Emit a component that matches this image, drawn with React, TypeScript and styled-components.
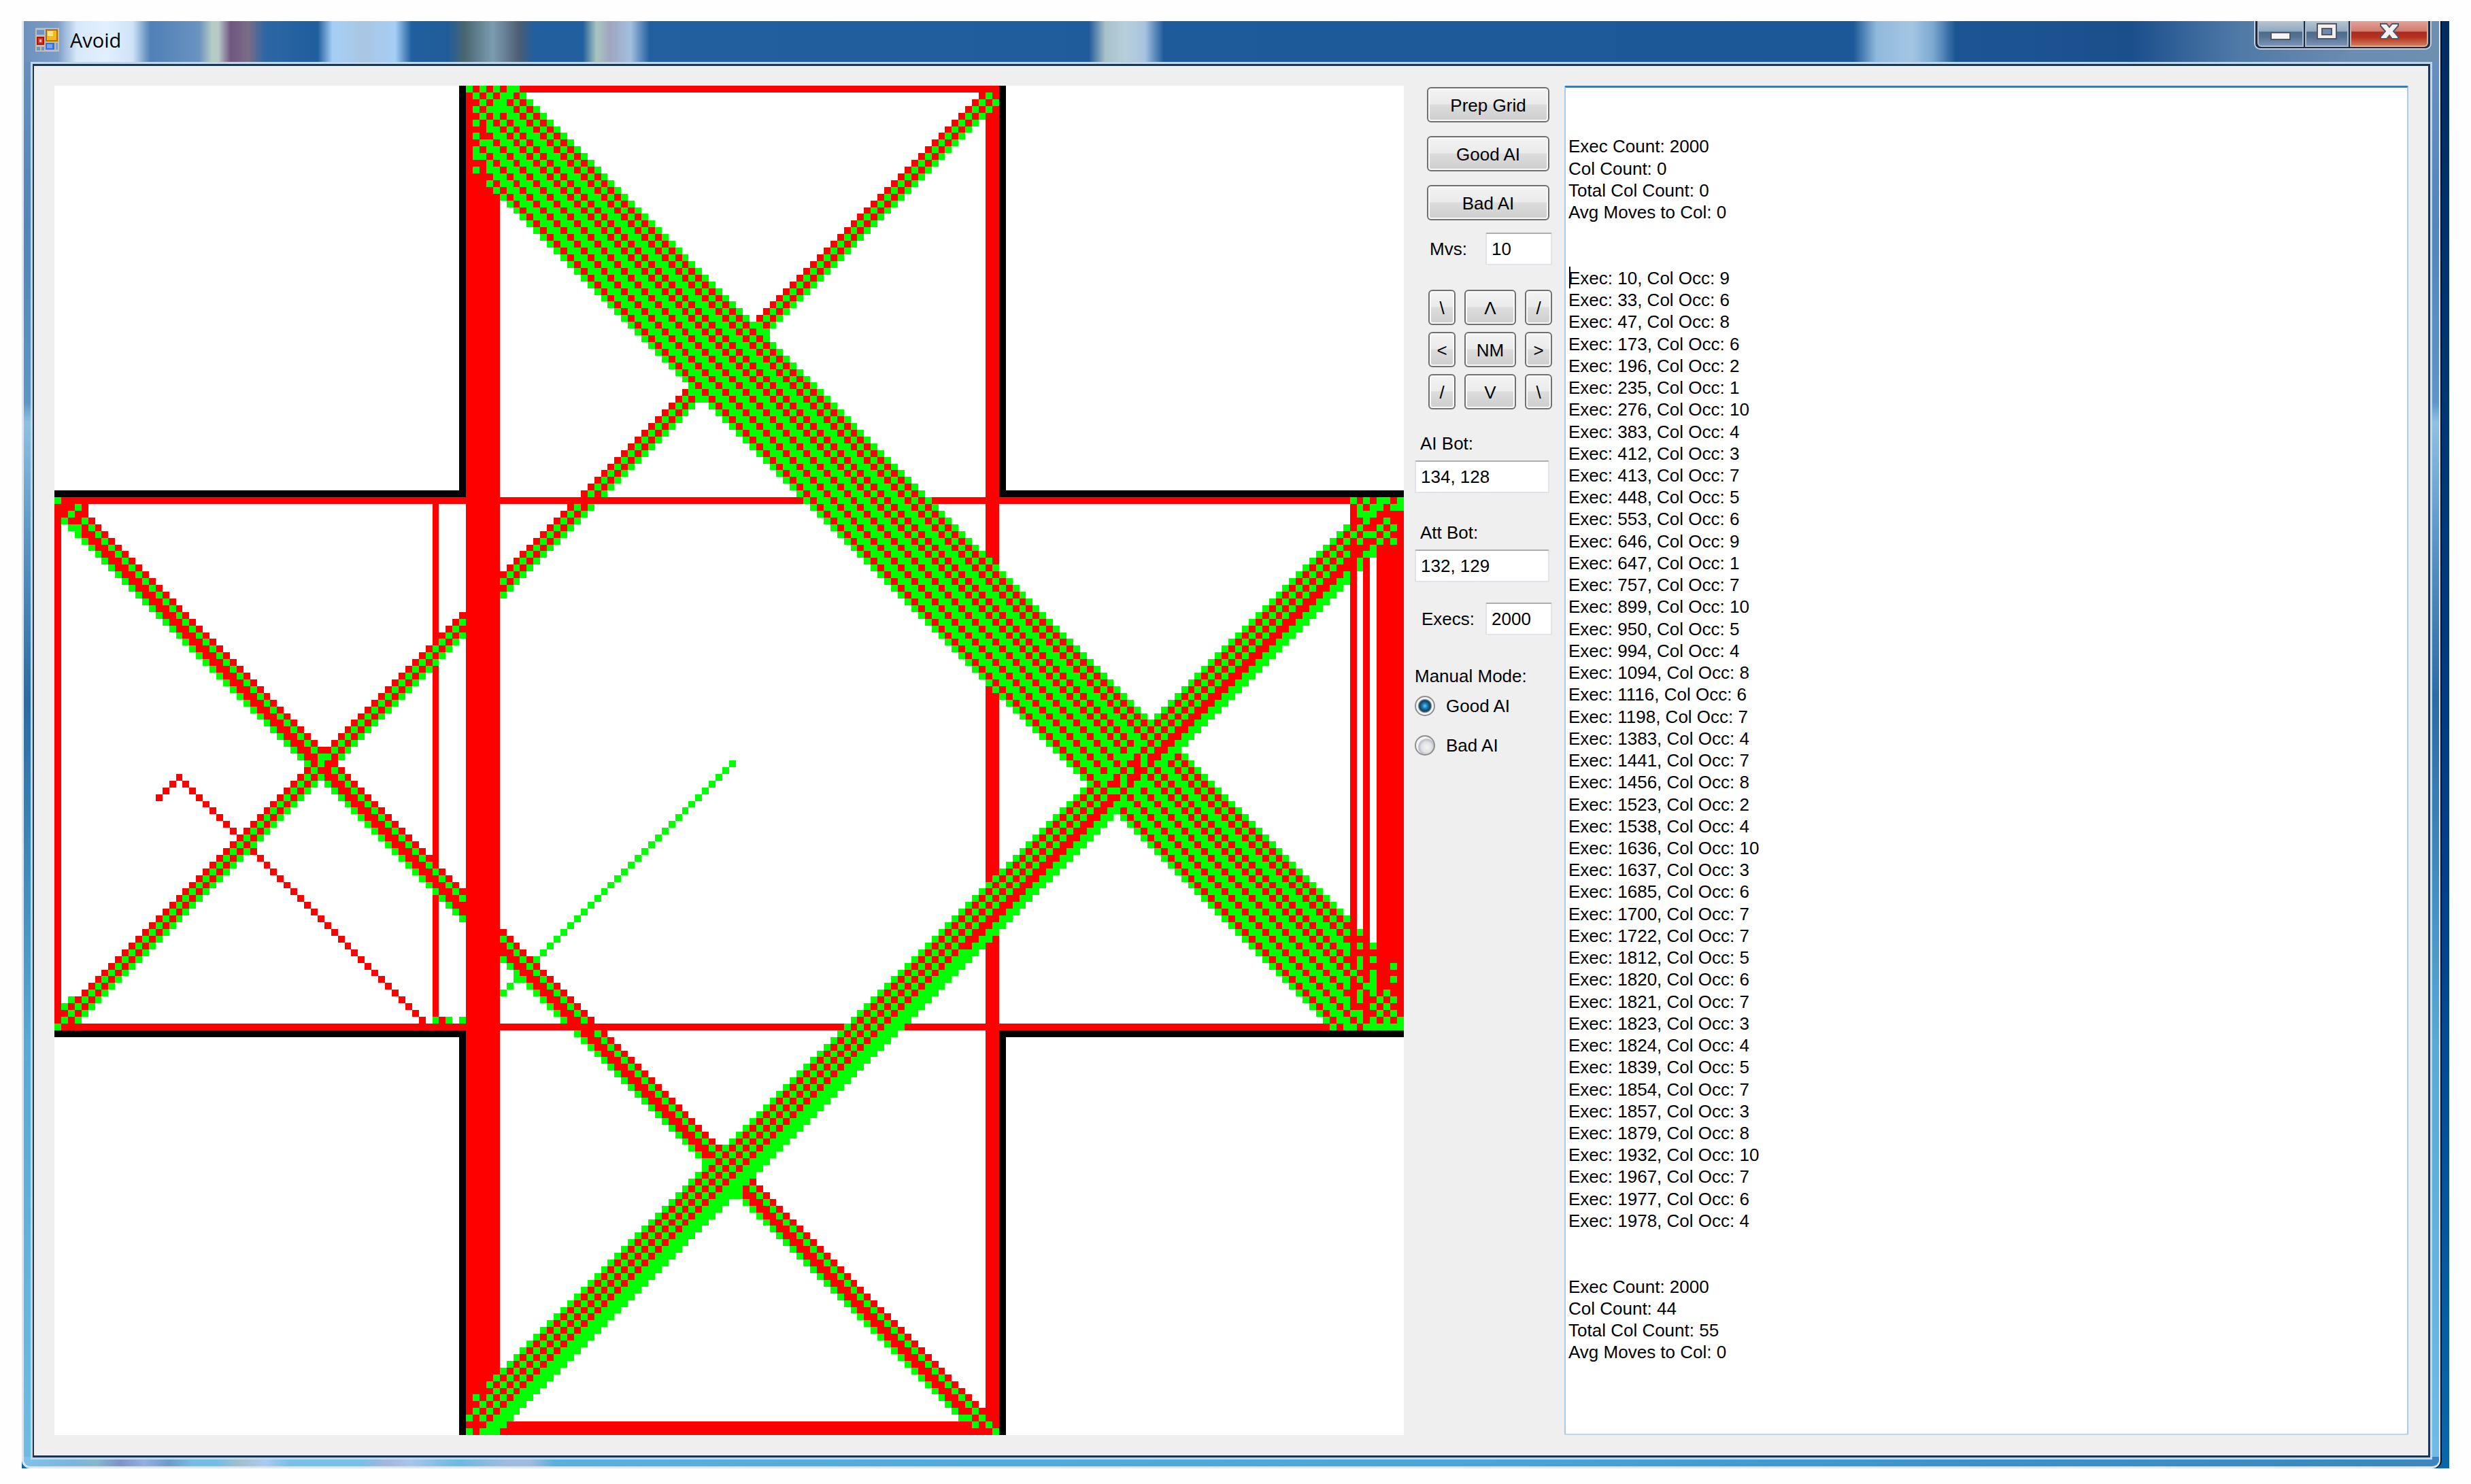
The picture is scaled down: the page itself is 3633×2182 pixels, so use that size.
import React from "react";
import styled, { createGlobalStyle, css } from "styled-components";

const GlobalStyle = createGlobalStyle`
  *, *::before, *::after { box-sizing: border-box; }
  body { margin: 0; background: #fefefe; }
`;

const uiFont = css`
  font-family: "Liberation Sans", Arial, sans-serif;
  font-size: 26px;
  line-height: 32px;
  color: #000;
`;

/* ---------- grid model ---------- */

const SIZE = 200;
type Cell = "W" | "R" | "G" | "K";

function buildGrid(): Cell[][] {
  const g: Cell[][] = Array.from({ length: SIZE }, () => Array<Cell>(SIZE).fill("W"));
  const inField = (x: number, y: number) =>
    x >= 0 && y >= 0 && x < SIZE && y < SIZE && ((x > 60 && x < 140) || (y > 60 && y < 140));
  const set = (x: number, y: number, c: Cell) => {
    if (x >= 0 && y >= 0 && x < SIZE && y < SIZE) g[y][x] = c;
  };
  const rect = (x0: number, x1: number, y0: number, y1: number, c: Cell) => {
    for (let y = y0; y <= y1; y++) for (let x = x0; x <= x1; x++) set(x, y, c);
  };
  const text = (y: number, x: number, s: string) => {
    for (let i = 0; i < s.length; i++) set(x + i, y, s[i] as Cell);
  };
  const falling = (first: number, s: string) => {
    for (let y = 0; y < SIZE; y++)
      for (let i = 0; i < s.length; i++) if (inField(y + first + i, y)) set(y + first + i, y, s[i] as Cell);
  };
  const rising = (first: number, s: string, y0 = 0, y1 = SIZE - 1) => {
    for (let y = y0; y <= y1; y++)
      for (let i = 0; i < s.length; i++) if (inField(first + i - y, y)) set(first + i - y, y, s[i] as Cell);
  };
  const weave = (y: number, x0: number, x1: number, reds: number[]) => {
    for (let x = x0; x <= x1; x++) set(x, y, reds.includes(x) ? "R" : "G");
  };

  // walls of the cross
  rect(60, 60, 0, 60, "K");
  rect(60, 60, 140, 199, "K");
  rect(140, 140, 0, 60, "K");
  rect(140, 140, 140, 199, "K");
  rect(0, 60, 60, 60, "K");
  rect(140, 199, 60, 60, "K");
  rect(0, 60, 140, 140, "K");
  rect(140, 199, 140, 140, "K");

  // side tracks
  rect(138, 139, 0, 199, "R");
  rect(0, 0, 61, 139, "R");
  rect(56, 56, 61, 138, "R");
  rect(192, 192, 61, 139, "R");
  rect(194, 194, 61, 139, "R");
  rect(196, 199, 61, 139, "R");

  // single trails
  for (let y = 100; y <= 134; y++) set(200 - y, y, "G");
  for (let i = 0; i < 4; i++) set(15 + i, 105 - i, "R");
  for (let y = 103; y <= 138; y++) set(y - 84, y, "R");
  text(138, 56, "GRGWG");

  // narrow diagonals
  falling(-63, "GRRGR");
  rising(138, "RGRG");
  set(39, 99, "G");
  set(41, 100, "R");
  set(40, 101, "R");

  // outer tracks
  rect(61, 139, 0, 0, "R");
  rect(61, 139, 198, 199, "R");
  rect(0, 199, 61, 61, "R");
  rect(0, 199, 139, 139, "R");
  rect(61, 65, 0, 199, "R");

  // wide diagonals
  rising(256, "GRGRGRRGG", 0, 127);
  rising(256, "GRGRGRGGG", 128, 199);
  falling(50, "GRGGRGGRGGRGRGGRGRG");

  weave(97, 147, 167, [148, 151, 154, 157, 159, 162, 164, 165]);
  weave(98, 148, 166, [149, 152, 155, 158, 161, 163, 164]);
  weave(99, 149, 167, [150, 153, 156, 160, 162, 163, 166]);
  weave(100, 150, 168, [151, 154, 157, 159, 160, 162, 165, 167]);
  weave(101, 151, 169, [152, 155, 158, 160, 161, 163, 166, 168]);
  weave(102, 152, 170, [153, 157, 159, 160, 162, 164, 167, 169]);
  weave(103, 153, 171, [154, 156, 157, 159, 163, 165, 168, 170]);
  weave(104, 152, 172, [153, 155, 158, 161, 164, 166, 169, 171]);
  weave(105, 151, 173, [152, 154, 156, 157, 159, 162, 165, 167, 170, 172]);
  weave(106, 150, 174, [151, 153, 155, 156, 160, 163, 166, 168, 171, 173]);

  // upper left of the column
  text(0, 61, "GRGRGRGG");
  text(1, 61, "RGRGRGGRG");
  text(2, 61, "RRGRGGRGRG");
  text(3, 61, "RGRGGGGRGRG");
  text(4, 61, "RRGRGRGGRGRG");
  text(5, 61, "RGRGRGRGGRGRG");
  text(6, 61, "RRR");
  text(7, 61, "RGRR");
  text(8, 61, "RR");
  text(9, 61, "RGR");
  text(10, 61, "RGG");
  text(11, 61, "RRR");
  text(12, 61, "RGR");
  text(13, 61, "RRRR");

  // lower left of the column
  set(62, 198, "R");
  set(61, 195, "R");
  set(63, 193, "R");

  // lower right of the column
  text(196, 133, "GRRGRRR");
  text(197, 134, "GGRGRR");
  text(198, 136, "GRGR");
  text(199, 139, "G");

  // left arm corners
  set(0, 61, "G");
  text(62, 0, "RRRGR");
  text(63, 0, "RRGRR");
  set(3, 65, "G");
  set(2, 135, "G");
  set(1, 136, "G");
  set(0, 139, "G");

  // right arm corners
  const top = [
    "RGRGRGGRG", "WRGRGGRGG", "WRGGGRRRR", "WRRGRRGRR", "GRGRRGRGR", "RGRGGRGRR",
    "GRGRRGRGR", "RRRRGRRRR", "GRRGGRRRR", "RRGRWRRRR", "RRGRWRRRR", "GRWRWRRRR", "GRWRWRRRR",
  ];
  top.forEach((s, i) => text(61 + i, 191, s));
  const bottom = [
    "RRWRWRRRR", "GRGRWRRRR", "RRRRWRRRR", "GRGRGRRRR", "GRRRRRRRR", "RRGRGRRRR", "GRGRRRRGR",
    "RGRRGRRRR", "GRGRGRRGR", "GRRGGRRRR", "RRGRGRGRR", "GRGRRGRGR", "GRRRGRGRR", "RGGRRGRGR",
    "GRGRGRGRG", "GGRGGGGGG",
  ];
  bottom.forEach((s, i) => text(124 + i, 191, s));

  return g;
}

function pathFor(grid: Cell[][], c: Cell): string {
  let d = "";
  grid.forEach((row, y) => {
    let x = 0;
    while (x < SIZE) {
      if (row[x] !== c) {
        x++;
        continue;
      }
      const start = x;
      while (x < SIZE && row[x] === c) x++;
      d += `M${start} ${y}h${x - start}v1h${start - x}z`;
    }
  });
  return d;
}

const grid = buildGrid();
const paths = { K: pathFor(grid, "K"), R: pathFor(grid, "R"), G: pathFor(grid, "G") };

/* ---------- log ---------- */

const runs: [number, number][] = [
  [10, 9], [33, 6], [47, 8], [173, 6], [196, 2], [235, 1], [276, 10], [383, 4], [412, 3], [413, 7],
  [448, 5], [553, 6], [646, 9], [647, 1], [757, 7], [899, 10], [950, 5], [994, 4], [1094, 8], [1116, 6],
  [1198, 7], [1383, 4], [1441, 7], [1456, 8], [1523, 2], [1538, 4], [1636, 10], [1637, 3], [1685, 6],
  [1700, 7], [1722, 7], [1812, 5], [1820, 6], [1821, 7], [1823, 3], [1824, 4], [1839, 5], [1854, 7],
  [1857, 3], [1879, 8], [1932, 10], [1967, 7], [1977, 6], [1978, 4],
];

const logText = [
  "", "",
  "Exec Count: 2000", "Col Count: 0", "Total Col Count: 0", "Avg Moves to Col: 0",
  "", "",
  ...runs.map(([n, occ]) => `Exec: ${n}, Col Occ: ${occ}`),
  "", "",
  "Exec Count: 2000", "Col Count: 44", "Total Col Count: 55", "Avg Moves to Col: 0",
].join("\n");

/* ---------- window chrome ---------- */

const Desktop = styled.div`
  padding: 31px 32px 24px;
`;

const Wallpaper = styled.div`
  padding-right: 13px;
  background: linear-gradient(180deg, #002d62 0, #01408a 60%, #0b66a8 100%);
`;

const Frame = styled.main`
  border: solid #dbe7f3;
  border-width: 0 2px 3px 3px;
  box-shadow: 2px 0 0 #04101f;
  border-radius: 0 0 12px 12px;
  padding: 0 10px 10px;
  background:
    linear-gradient(90deg, #7fc2ea 0, #7cb5dd 2%, #84b8cc 3%, #8093c8 4%, #92b0e2 5%, #6f9ccb 6%, #76bde6 7%, #76bde6 8%, #a4c0cc 9%, #aacbf2 10%, #78c0e8 11%, #78c0e8 14%, #a6b6da 15%, #a8c6ea 16%, #6bbae2 18%, #9fbcde 20%, #9fbcde 21%, #58b0dd 22%, #4aa6d8 60%, #3b93ca 80%, #3c86bc 100%) bottom / 100% 14px no-repeat,
    linear-gradient(180deg, #6d92be 0, #5285ba 300px, #5c95c6 560px, #8fc0e0 590px, #5a96c6 760px, #2a6ba4 1000px, #58a9d6 1500px, #6fbbe4 100%);
`;

const TitleBar = styled.header`
  display: flex;
  align-items: flex-start;
  justify-content: space-between;
  height: 60px;
  margin: 0 -10px;
  padding-left: 17px;
  background: linear-gradient(
    90deg,
    #6c91be 0, #7c9dc6 50px, #d6e8fa 78px, #e2f0fe 120px, #cfe3f8 160px, #4f80b6 186px, #6a93c0 258px,
    #b4cac6 276px, #b6cbc5 286px, #705680 304px, #7a6c86 330px, #2e66a3 354px, #1f5e9f 432px,
    #a6cff6 454px, #a9c6e2 500px, #a6cef6 546px, #205f9e 570px, #205c98 624px, #4a6671 648px,
    #7c9cb0 690px, #4d5d74 728px, #215f9e 750px, #215f9e 822px, #a9c5bd 842px, #9fa5c0 862px,
    #a4bfe0 892px, #22609f 920px, #1f5c9b 1566px, #a8c0c8 1590px, #b6cfdc 1620px, #a9c4e0 1648px,
    #1e5b9a 1676px, #1c5797 2690px, #8fb9dc 2724px, #a4c6e4 2776px, #7aa7d0 2808px, #1c5594 2840px,
    #1b4f8c 3100px, #4e78a6 3250px, #6c8cb0 3420px, #6f8fb0 100%
  );
`;

const Caption = styled.div`
  display: flex;
  align-items: flex-start;
  gap: 16px;
  padding-top: 8px;
`;

const AppIconSvg = styled.svg`
  display: block;
  margin-top: 2px;
`;

const AppTitle = styled.h1`
  margin: 0;
  font: 400 29px/40px "Open Sans", "Noto Sans", sans-serif;
  color: #000;
`;

const CaptionButtons = styled.div`
  display: flex;
  gap: 2px;
  height: 42px;
  margin-right: 11px;
  padding: 0 3px 3px;
  border: 2px solid #c3d0de;
  border-top: 0;
  border-radius: 0 0 9px 9px;
  background: #1f2c40;
`;

const CaptionButton = styled.button<{ $width: number; $danger?: boolean }>`
  display: flex;
  justify-content: center;
  width: ${(p) => p.$width}px;
  height: 38px;
  padding: 0;
  border: solid ${(p) => (p.$danger ? "#e0a79c" : "#a9bccf")};
  border-width: 0 2px 2px;
  background: ${(p) =>
    p.$danger
      ? "linear-gradient(180deg, #e2a298 0, #d27a6e 15px, #a62b20 16px, #b8321f 24px, #cf7c5c 100%)"
      : "linear-gradient(180deg, #b7c5d5 0, #93a7bd 15px, #4c6a8b 16px, #587495 24px, #7c93b6 100%)"};
  &:first-child { border-bottom-left-radius: 6px; }
  &:last-child { border-bottom-right-radius: 6px; }
`;

const Client = styled.section`
  border: 3px solid #c2d6e6;
`;

const Body = styled.div`
  display: flex;
  align-items: stretch;
  border: solid #1c3550;
  border-width: 3px 3px 3px 2px;
  padding: 29px 29px 30px 30px;
  background: #efefef;
`;

/* ---------- content ---------- */

const Board = styled.svg`
  display: block;
  flex: 0 1 1984px;
  min-width: 0;
  aspect-ratio: 1;
  background: #fff;
`;

const Panel = styled.form`
  ${uiFont}
  display: flex;
  flex-direction: column;
  flex: 0 0 202px;
  margin: 0 18px 0 16px;
  padding-top: 2px;
`;

const ButtonStack = styled.div`
  display: grid;
  gap: 20px;
  width: 180px;
  margin: 0 0 18px 18px;
`;

const PushButton = styled.button`
  ${uiFont}
  height: 52px;
  padding: 2px 0 0;
  border: 2px solid #707070;
  border-radius: 6px;
  background: linear-gradient(180deg, #f3f3f3 0, #ebebeb 48%, #dcdcdc 50%, #cecece 100%);
  box-shadow: inset 0 0 0 2px #fafafa;
`;

const Pad = styled.div`
  display: grid;
  grid-template-columns: 40px 76px 40px;
  gap: 10px 13px;
  margin: 36px 0 34px 20px;
`;

const InlineField = styled.div<{ $indent: number }>`
  display: flex;
  align-items: center;
  justify-content: space-between;
  padding-left: ${(p) => p.$indent}px;
`;

const Field = styled.div<{ $after: number }>`
  display: grid;
  gap: 9px;
  margin-bottom: ${(p) => p.$after}px;
  padding-right: 4px;
  label { padding-left: 8px; }
`;

const TextInput = styled.input<{ $short?: boolean }>`
  ${uiFont}
  width: ${(p) => (p.$short ? "98px" : "100%")};
  height: 48px;
  padding: 0 7px;
  border: 2px solid #e0e3ea;
  border-top-color: #abadb3;
  border-radius: 2px;
  background: #fff;
  outline: 0;
`;

const Modes = styled.fieldset`
  margin: 44px 0 0;
  padding: 0;
  border: 0;
  legend { padding: 0; margin-bottom: 12px; }
`;

const Mode = styled.label`
  display: flex;
  align-items: center;
  gap: 16px;
  height: 32px;
  margin-bottom: 26px;
`;

const Radio = styled.input`
  appearance: none;
  width: 30px;
  height: 30px;
  margin: 0;
  border: 2px solid #8e8f8f;
  border-radius: 50%;
  background: radial-gradient(circle at 60% 60%, #f4f4f4 0, #dfe1e4 35%, #b9bec6 52%, #f4f4f4 60%);
  &:checked {
    background: radial-gradient(circle at 50% 50%, #5fd0f5 0, #1f7fb8 20%, #12405f 42%, #5a6f80 50%, #f4f4f4 58%);
  }
`;

const LogPane = styled.div`
  position: relative;
  display: flex;
  flex: 1 1 0;
  min-width: 0;
`;

const Log = styled.textarea`
  ${uiFont}
  line-height: 1.24;
  flex: 1;
  min-width: 0;
  margin: 0;
  padding: 6px 4px;
  border: 2px solid #a9cde9;
  border-top: 3px solid #3d7bad;
  border-bottom-color: #b7d9ed;
  border-radius: 2px;
  background: #fff;
  resize: none;
  outline: 0;
  overflow: hidden;
  white-space: pre;
`;

const Caret = styled.span`
  position: absolute;
  left: 7px;
  top: 266px;
  width: 2px;
  height: 32px;
  background: #000;
`;

const AppIcon = () => (
  <AppIconSvg width="35" height="35" viewBox="0 0 35 35" aria-hidden="true">
    <rect width="35" height="35" fill="#c0bdb8" />
    <rect x="2" y="3" width="11" height="7" fill="#6f93c0" />
    <rect x="15" y="2" width="18" height="18" fill="#a87400" />
    <rect x="17" y="4" width="14" height="14" fill="#f5b91e" />
    <rect x="18" y="5" width="8" height="7" fill="#ffe08a" />
    <rect x="2" y="13" width="11" height="12" fill="#a3170d" />
    <rect x="4" y="15" width="7" height="8" fill="#d8392b" />
    <rect x="6" y="17" width="3" height="4" fill="#f3b3aa" />
    <rect x="15" y="22" width="13" height="10" fill="#3b6fd6" />
    <rect x="17" y="24" width="8" height="6" fill="#6ea2ff" />
    <rect x="30" y="22" width="3" height="10" fill="#7d9fca" />
    <rect x="2" y="28" width="5" height="5" fill="#6f93c0" />
    <rect x="9" y="28" width="4" height="5" fill="#6f93c0" />
  </AppIconSvg>
);

const MinimizeIcon = () => (
  <svg width="30" height="38" viewBox="0 0 30 38" aria-hidden="true">
    <rect x="1" y="17" width="28" height="10" fill="#f6f6f6" stroke="#535666" strokeWidth="2" />
  </svg>
);

const MaximizeIcon = () => (
  <svg width="30" height="38" viewBox="0 0 30 38" aria-hidden="true">
    <rect x="1" y="4" width="28" height="22" fill="#f1f1f1" stroke="#535666" strokeWidth="2" />
    <rect x="8" y="11" width="14" height="9" fill="#6d8bb0" stroke="#535666" strokeWidth="2" />
  </svg>
);

const CloseIcon = () => (
  <svg width="30" height="38" viewBox="0 0 30 38" aria-hidden="true">
    <path
      d="M2 4h9l4 5 4-5h9v3l-7 8 7 8v3h-9l-4-5-4 5H2v-3l7-8-7-8z"
      fill="#f3f3f3"
      stroke="#535666"
      strokeWidth="2"
    />
  </svg>
);

const padKeys: [string, string][] = [
  ["\\", "Up left"], ["Λ", "Up"], ["/", "Up right"],
  ["<", "Left"], ["NM", "No move"], [">", "Right"],
  ["/", "Down left"], ["V", "Down"], ["\\", "Down right"],
];

export default function App() {
  return (
    <Desktop>
      <GlobalStyle />
      <Wallpaper>
        <Frame>
          <TitleBar>
            <Caption>
              <AppIcon />
              <AppTitle>Avoid</AppTitle>
            </Caption>
            <CaptionButtons>
              <CaptionButton $width={68} aria-label="Minimize"><MinimizeIcon /></CaptionButton>
              <CaptionButton $width={64} aria-label="Maximize"><MaximizeIcon /></CaptionButton>
              <CaptionButton $width={115} $danger aria-label="Close"><CloseIcon /></CaptionButton>
            </CaptionButtons>
          </TitleBar>
          <Client>
            <Body>
              <Board viewBox="0 0 200 200" shapeRendering="crispEdges" role="img" aria-label="Grid">
                <path d={paths.K} fill="#000" />
                <path d={paths.R} fill="#f00" />
                <path d={paths.G} fill="#0f0" />
              </Board>
              <Panel onSubmit={(e) => e.preventDefault()}>
                <ButtonStack>
                  <PushButton type="button">Prep Grid</PushButton>
                  <PushButton type="button">Good AI</PushButton>
                  <PushButton type="button">Bad AI</PushButton>
                </ButtonStack>
                <InlineField $indent={22}>
                  <label htmlFor="mvs">Mvs:</label>
                  <TextInput id="mvs" $short defaultValue="10" />
                </InlineField>
                <Pad>
                  {padKeys.map(([text, label]) => (
                    <PushButton key={label} type="button" aria-label={label}>{text}</PushButton>
                  ))}
                </Pad>
                <Field $after={42}>
                  <label htmlFor="aibot">AI Bot:</label>
                  <TextInput id="aibot" defaultValue="134, 128" />
                </Field>
                <Field $after={30}>
                  <label htmlFor="attbot">Att Bot:</label>
                  <TextInput id="attbot" defaultValue="132, 129" />
                </Field>
                <InlineField $indent={10}>
                  <label htmlFor="execs">Execs:</label>
                  <TextInput id="execs" $short defaultValue="2000" />
                </InlineField>
                <Modes>
                  <legend>Manual Mode:</legend>
                  <Mode><Radio type="radio" name="mode" defaultChecked />Good AI</Mode>
                  <Mode><Radio type="radio" name="mode" />Bad AI</Mode>
                </Modes>
              </Panel>
              <LogPane>
                <Log aria-label="Log" spellCheck={false} defaultValue={logText} />
                <Caret />
              </LogPane>
            </Body>
          </Client>
        </Frame>
      </Wallpaper>
    </Desktop>
  );
}
